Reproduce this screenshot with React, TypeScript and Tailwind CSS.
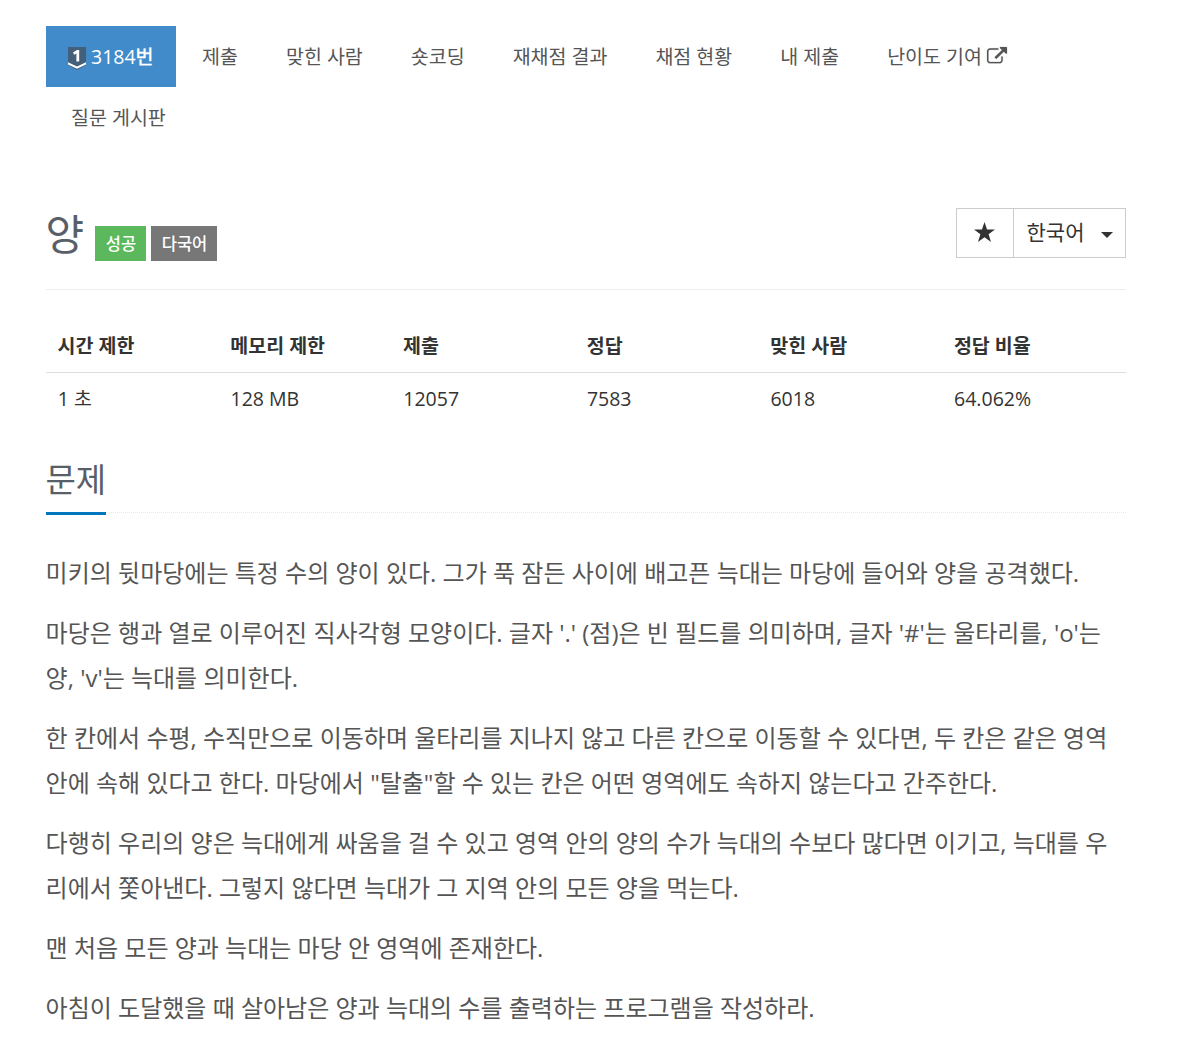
import { clsx } from 'clsx'
import type { ReactNode } from 'react'

const menus = ['제출', '맞힌 사람', '숏코딩', '재채점 결과', '채점 현황', '내 제출', '난이도 기여', '질문 게시판']

const info = [
    { label: '시간 제한', value: '1 초', width: 'w-[16%]' },
    { label: '메모리 제한', value: '128 MB', width: 'w-[16%]' },
    { label: '제출', value: '12057', width: 'w-[17%]' },
    { label: '정답', value: '7583', width: 'w-[17%]' },
    { label: '맞힌 사람', value: '6018', width: 'w-[17%]' },
    { label: '정답 비율', value: '64.062%', width: 'w-[17%]' },
]

const paragraphs = [
    '미키의 뒷마당에는 특정 수의 양이 있다. 그가 푹 잠든 사이에 배고픈 늑대는 마당에 들어와 양을 공격했다.',
    "마당은 행과 열로 이루어진 직사각형 모양이다. 글자 '.' (점)은 빈 필드를 의미하며, 글자 '#'는 울타리를, 'o'는 양, 'v'는 늑대를 의미한다.",
    '한 칸에서 수평, 수직만으로 이동하며 울타리를 지나지 않고 다른 칸으로 이동할 수 있다면, 두 칸은 같은 영역 안에 속해 있다고 한다. 마당에서 "탈출"할 수 있는 칸은 어떤 영역에도 속하지 않는다고 간주한다.',
    '다행히 우리의 양은 늑대에게 싸움을 걸 수 있고 영역 안의 양의 수가 늑대의 수보다 많다면 이기고, 늑대를 우리에서 쫓아낸다. 그렇지 않다면 늑대가 그 지역 안의 모든 양을 먹는다.',
    '맨 처음 모든 양과 늑대는 마당 안 영역에 존재한다.',
    '아침이 도달했을 때 살아남은 양과 늑대의 수를 출력하는 프로그램을 작성하라.',
]

function TierIcon() {
    return (
        <svg viewBox="0 0 18 23" className="mt-[3px] mr-[5px] h-[23px] w-[18px]">
            <path d="M0 0h18v18l-9 5-9-5z" fill="#435f7a" />
            <path d="M0 15.2l9 4.3 9-4.3v2.2l-9 4.3-9-4.3z" fill="#fff" />
            <path d="M5 5.4L9 3h2.2v11.5H8.4V6.4L6.1 7.7z" fill="#fff" />
        </svg>
    )
}

function ExternalLinkIcon() {
    return (
        <svg viewBox="0 0 1792 1792" fill="currentColor" stroke="currentColor" strokeWidth="20" className="ml-[5px] h-[19px] w-[20px] overflow-visible" preserveAspectRatio="none">
            <path d="M1408 928v320q0 119-84.5 203.5t-203.5 84.5h-832q-119 0-203.5-84.5t-84.5-203.5v-832q0-119 84.5-203.5t203.5-84.5h704q14 0 23 9t9 23v64q0 14-9 23t-23 9h-704q-66 0-113 47t-47 113v832q0 66 47 113t113 47h832q66 0 113-47t47-113v-320q0-14 9-23t23-9h64q14 0 23 9t9 23zm384-864v512q0 26-19 45t-45 19-45-19l-176-176-652 652q-10 10-23 10t-23-10l-114-114q-10-10-10-23t10-23l652-652-176-176q-19-19-19-45t19-45 45-19h512q26 0 45 19t19 45z" />
        </svg>
    )
}

function Label({ className, children }: { className: string; children: ReactNode }) {
    return (
        <span className={clsx('flex h-[35px] items-center justify-center pt-[2px] pl-[1px] text-[16.5px] font-medium text-white', className)}>
            {children}
        </span>
    )
}

export default function App() {
    return (
        <main className="h-[1040px] w-[1178px] overflow-hidden bg-white pt-[26px] pl-[46px] font-['Open_Sans','Noto_Sans_CJK_KR',sans-serif] text-[19.5px] text-[#333]" lang="ko">
            <div className="w-[1080px]">
                <ul className="flex flex-wrap text-[#555]">
                    <li className="flex h-[61px] w-[130px] items-center bg-[#428bca] pl-[22px] text-white">
                        <TierIcon />
                        <span className="font-medium">3184</span>
                        <span className="[-webkit-text-stroke:0.4px_#fff]">번</span>
                    </li>
                    {menus.map((menu, i) => (
                        <li key={menu} className={clsx('flex h-[61px] items-center px-[22.5px]', i === 0 ? 'ml-[3.6px]' : i === menus.length - 1 ? 'ml-[2.5px]' : 'ml-[3px]')}>
                            {menu}
                            {menu === '난이도 기여' && <ExternalLinkIcon />}
                        </li>
                    ))}
                </ul>

                <header className="mt-[60px] flex h-[82px] items-start justify-between border-b border-[#eee]">
                    <div className="flex">
                        <h1 className="-ml-[0.5px] mr-[11.5px] w-[38px] text-[42px] leading-[52px] text-[#585f69]">양</h1>
                        <Label className="mt-[18px] mr-[5px] w-[51px] bg-[#5cb85c]">성공</Label>
                        <Label className="mt-[18px] w-[66px] bg-[#777]">다국어</Label>
                    </div>
                    <div className="flex h-[50px] border border-[#ccc]">
                        <button className="flex w-[57px] items-center justify-center border-r border-[#ccc] pr-[2px]">
                            <svg viewBox="0 0 20 19" fill="#333" className="mb-[3px] h-[20px] w-[21px]">
                                <path d="M10 0l2.4 7.2H20l-6.1 4.5 2.3 7.3-6.2-4.5L3.8 19l2.3-7.3L0 7.2h7.6z" />
                            </svg>
                        </button>
                        <button className="flex w-[111px] items-center pl-[12.5px] text-[21px]">
                            <span>한국어</span>
                            <svg viewBox="0 0 12 6" fill="#333" className="mt-[3px] ml-[16.5px] h-[6px] w-[12px]">
                                <path d="M0 0h12L6 6z" />
                            </svg>
                        </button>
                    </div>
                </header>

                <table className="mt-[29px] w-full table-fixed text-left">
                    <thead>
                        <tr className="h-[53px] border-b border-[#ddd]">
                            {info.map(({ label, width }) => (
                                <th key={label} className={clsx('px-[11.5px] font-bold', width)}>{label}</th>
                            ))}
                        </tr>
                    </thead>
                    <tbody>
                        <tr className="h-[52px]">
                            {info.map(({ label, value }) => (
                                <td key={label} className="px-[11.7px]">{value}</td>
                            ))}
                        </tr>
                    </tbody>
                </table>

                <section className="mt-[31px]">
                    <div className="flex h-[58px] border-b border-dotted border-[#e4e9f0]">
                        <h2 className="h-[60px] w-[60px] border-b-[3px] border-[#0076bd] text-[33px] leading-[50px] whitespace-nowrap text-[#585f69]">
                            <span className="-ml-[0.5px]">문제</span>
                        </h2>
                    </div>
                    <div className="mt-[37px] -ml-[0.4px] space-y-[15px] text-[24px] leading-[45px] text-[#555]">
                        {paragraphs.map((text) => (
                            <p key={text}>{text}</p>
                        ))}
                    </div>
                </section>
            </div>
        </main>
    )
}
